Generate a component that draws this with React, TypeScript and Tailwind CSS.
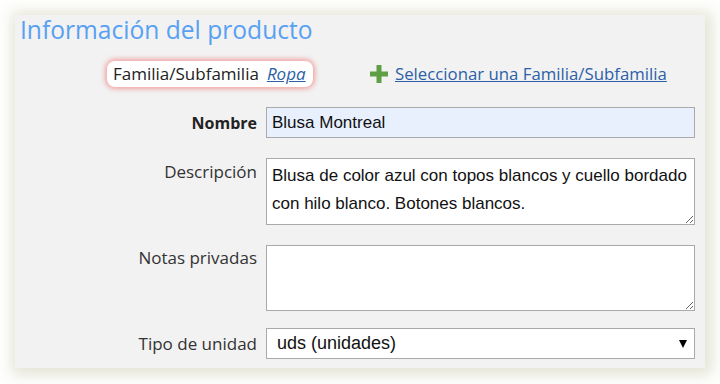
const sans = "font-['Open_Sans',_'Noto_Sans',_sans-serif]";
const arial = "font-['Liberation_Sans',_Arial,_sans-serif]";

const ProductInfo = () => {
  return (
    <div className="min-h-screen bg-white pt-[15px] pl-[15px]">
      <div className={`w-[690px] h-[353px] bg-[#f2f2f2] shadow-[2px_2px_14px_5px_rgba(200,200,170,0.5)] ${sans}`}>
        {/* Title */}
        <h2 className="pl-[5px] text-[24.6px] leading-[30px] text-[#58a0f2]">
          Información del producto
        </h2>

        {/* Familia row */}
        <div className="flex items-center mt-[16px] h-[26px]">
          <div className="ml-[92px] w-[206px] h-[26px] flex items-center pl-[6px] bg-white rounded-[8px] shadow-[0_0_5px_2px_rgba(240,110,110,0.6)] text-[17px] text-[#222]">
            <span>Familia/Subfamilia</span>
            <a href="#" className="ml-[8px] italic underline text-[#2c5fa8]">Ropa</a>
          </div>
          <div className="ml-[57px] flex items-center">
            <svg width="18" height="18" viewBox="0 0 18 18" className="mr-[7px]">
              <path d="M6.5 0h5v6.5H18v5h-6.5V18h-5v-6.5H0v-5h6.5z" fill="#5e9e44" />
            </svg>
            <a href="#" className="text-[16.8px] underline text-[#2c5fa8]">Seleccionar una Familia/Subfamilia</a>
          </div>
        </div>

        {/* Form */}
        <div className="mt-[20px] grid grid-cols-[242px_429px] gap-x-[9px]">
          <label className="h-[31px] flex items-center justify-end text-[16px] font-bold text-[#222]">Nombre</label>
          <input
            defaultValue="Blusa Montreal"
            className={`h-[31px] px-[5px] bg-[#e8f0fe] border border-[#aaa] text-[17px] text-[#111] outline-none ${arial}`}
          />

          <label className="mt-[20px] pt-[1px] text-right text-[17px] text-[#333]">Descripción</label>
          <textarea
            defaultValue="Blusa de color azul con topos blancos y cuello bordado con hilo blanco. Botones blancos."
            className={`mt-[20px] h-[67px] px-[5px] pt-[3px] bg-white border border-[#aaa] text-[17px] leading-[28px] text-[#111] resize-y outline-none ${arial}`}
          />

          <label className="mt-[20px] text-right text-[17px] text-[#333]">Notas privadas</label>
          <textarea
            className={`mt-[20px] h-[66px] px-[5px] bg-white border border-[#aaa] text-[17px] resize-y outline-none ${arial}`}
          />

          <label className="mt-[17px] h-[31px] flex items-center justify-end text-[17px] text-[#333]">Tipo de unidad</label>
          <div className="mt-[17px] relative h-[31px]">
            <select
              defaultValue="uds"
              className={`w-full h-full pl-[10px] appearance-none bg-white border border-[#aaa] text-[18px] text-[#111] outline-none ${arial}`}
            >
              <option value="uds">uds (unidades)</option>
            </select>
            <span className="pointer-events-none absolute right-[8px] top-[12px] w-0 h-0 border-l-[4px] border-r-[4px] border-t-[8px] border-l-transparent border-r-transparent border-t-black" />
          </div>
        </div>
      </div>
    </div>
  );
};

export default function App() {
  return <ProductInfo />;
}
